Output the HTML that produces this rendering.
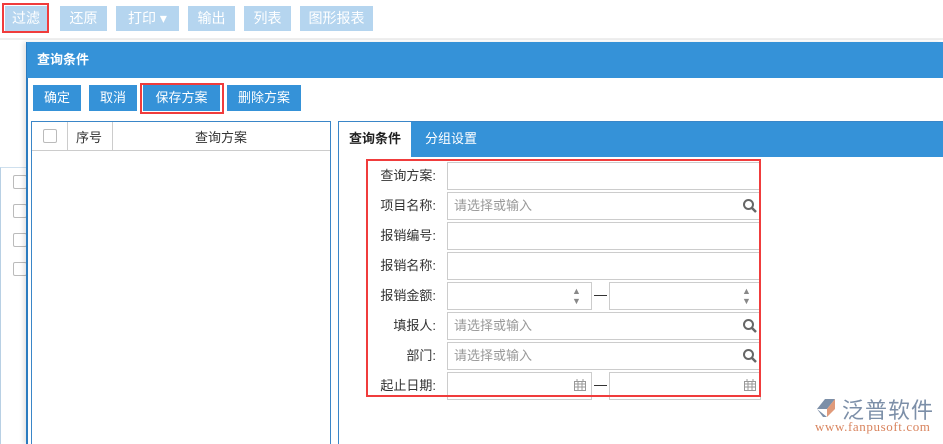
<!DOCTYPE html>
<html style="width:943px;height:444px;overflow:hidden"><head><meta charset="utf-8"><style>
*{margin:0;padding:0;box-sizing:border-box}
body{width:943px;height:444px;overflow:hidden;background:#fff;position:relative;font-family:"Liberation Sans","Noto Sans CJK SC",sans-serif;font-size:13px;color:#333}
.a{position:absolute}
.tb{position:absolute;top:6px;height:25px;background:#b5d5ef;color:#fff;font-size:14px;line-height:25px;text-align:center}
.btn{position:absolute;top:85px;height:26px;background:#3592d8;color:#fff;font-size:13px;line-height:26px;text-align:center}
.red{position:absolute;border:2px solid #f03c3c}
.lbl{position:absolute;left:366px;width:70px;height:28px;line-height:28px;text-align:right;font-size:13px;color:#333}
.in{position:absolute;height:28px;border:1px solid #ccc;background:#fff;color:#999;font-size:13px;line-height:26px;padding-left:6px}
.cb{position:absolute;width:14px;height:14px;border:1px solid #bbb;border-radius:2px;background:#fff}
</style></head><body>
<div class="a" style="left:0;top:38px;width:943px;height:2px;background:#eee"></div>
<div class="tb" style="left:5px;width:42px">过滤</div>
<div class="red" style="left:2px;top:3px;width:47px;height:30px"></div>
<div class="tb" style="left:60px;width:47px">还原</div>
<div class="tb" style="left:116px;width:63px">打印 ▾</div>
<div class="tb" style="left:188px;width:47px">输出</div>
<div class="tb" style="left:244px;width:47px">列表</div>
<div class="tb" style="left:300px;width:73px">图形报表</div>
<div class="a" style="left:0;top:167px;width:27px;height:277px;border-top:1px solid #cfe0ee;border-left:1px solid #b8d0e4"></div>
<div class="cb" style="left:13px;top:175px"></div>
<div class="cb" style="left:13px;top:204px"></div>
<div class="cb" style="left:13px;top:233px"></div>
<div class="cb" style="left:13px;top:262px"></div>
<div class="a" style="left:26px;top:42px;width:917px;height:402px;background:#fff;border-left:2px solid #2b7bbf;box-shadow:-3px 0 4px rgba(0,0,0,.1)"></div>
<div class="a" style="left:27px;top:42px;width:916px;height:36px;background:#3592d8;color:#fff;font-weight:bold;font-size:13px;line-height:36px;padding-left:10px">查询条件</div>
<div class="btn" style="left:33px;width:48px">确定</div>
<div class="btn" style="left:89px;width:48px">取消</div>
<div class="btn" style="left:143px;width:77px">保存方案</div>
<div class="red" style="left:140px;top:83px;width:84px;height:31px"></div>
<div class="btn" style="left:227px;width:74px">删除方案</div>
<div class="a" style="left:31px;top:121px;width:300px;height:326px;border:1px solid #3a86c8"></div>
<div class="a" style="left:32px;top:150px;width:298px;height:1px;background:#ccc"></div>
<div class="a" style="left:67px;top:122px;width:1px;height:28px;background:#ccc"></div>
<div class="a" style="left:112px;top:122px;width:1px;height:28px;background:#ccc"></div>
<div class="cb" style="left:43px;top:129px"></div>
<div class="a" style="left:76px;top:127px;font-size:13px">序号</div>
<div class="a" style="left:195px;top:127px;font-size:13px">查询方案</div>
<div class="a" style="left:338px;top:121px;width:610px;height:326px;border:1px solid #3a86c8"></div>
<div class="a" style="left:339px;top:122px;width:604px;height:35px;background:#3592d8"></div>
<div class="a" style="left:339px;top:122px;width:72px;height:36px;background:#fff;font-weight:bold;font-size:13px;line-height:34px;text-align:center;color:#222">查询条件</div>
<div class="a" style="left:425px;top:122px;color:#fff;font-size:13px;line-height:34px">分组设置</div>
<div class="lbl" style="top:162px">查询方案:</div>
<div class="in" style="left:447px;top:162px;width:314px"></div>
<div class="lbl" style="top:192px">项目名称:</div>
<div class="in" style="left:447px;top:192px;width:314px">请选择或输入</div>
<div class="lbl" style="top:222px">报销编号:</div>
<div class="in" style="left:447px;top:222px;width:314px"></div>
<div class="lbl" style="top:252px">报销名称:</div>
<div class="in" style="left:447px;top:252px;width:314px"></div>
<div class="lbl" style="top:282px">报销金额:</div>
<div class="in" style="left:447px;top:282px;width:145px"></div>
<div class="in" style="left:609px;top:282px;width:152px"></div>
<div class="a" style="left:594px;top:295px;width:13px;height:1px;background:#333"></div>
<div class="a" style="left:572px;top:286px;color:#888;font-size:9px;line-height:10px">▲<br>▼</div>
<div class="a" style="left:742px;top:286px;color:#888;font-size:9px;line-height:10px">▲<br>▼</div>
<div class="lbl" style="top:312px">填报人:</div>
<div class="in" style="left:447px;top:312px;width:314px">请选择或输入</div>
<div class="lbl" style="top:342px">部门:</div>
<div class="in" style="left:447px;top:342px;width:314px">请选择或输入</div>
<div class="lbl" style="top:372px">起止日期:</div>
<div class="in" style="left:447px;top:372px;width:145px"></div>
<div class="in" style="left:609px;top:372px;width:152px"></div>
<div class="a" style="left:594px;top:385px;width:13px;height:1px;background:#333"></div>
<svg class="a" style="left:742px;top:198px" width="16" height="16"><circle cx="6.5" cy="6.5" r="4.5" fill="none" stroke="#666" stroke-width="2"/><path d="M10 10l4 4" stroke="#666" stroke-width="2.5"/></svg>
<svg class="a" style="left:742px;top:318px" width="16" height="16"><circle cx="6.5" cy="6.5" r="4.5" fill="none" stroke="#666" stroke-width="2"/><path d="M10 10l4 4" stroke="#666" stroke-width="2.5"/></svg>
<svg class="a" style="left:742px;top:348px" width="16" height="16"><circle cx="6.5" cy="6.5" r="4.5" fill="none" stroke="#666" stroke-width="2"/><path d="M10 10l4 4" stroke="#666" stroke-width="2.5"/></svg>
<svg class="a" style="left:574px;top:379px" width="12" height="12"><rect x="0.5" y="2.5" width="11" height="9" fill="none" stroke="#999"/><path d="M0 5h12M4 3v9M8 3v9M0 8h12M3 0v3M9 0v3" stroke="#999"/></svg>
<svg class="a" style="left:744px;top:379px" width="12" height="12"><rect x="0.5" y="2.5" width="11" height="9" fill="none" stroke="#999"/><path d="M0 5h12M4 3v9M8 3v9M0 8h12M3 0v3M9 0v3" stroke="#999"/></svg>
<div class="red" style="left:366px;top:159px;width:395px;height:238px"></div>
<svg class="a" style="left:815px;top:397px" width="28" height="22"><path d="M2 12L10 2h10L12 12z" fill="#7c8fa8"/><path d="M12 12l8-10v10l-8 8z" fill="#e09a7a"/><path d="M2 12l6 8h4z" fill="#7c8fa8"/></svg>
<div class="a" style="left:842px;top:393px;font-size:22px;color:#7c8fa8;letter-spacing:1px">泛普软件</div>
<div class="a" style="left:815px;top:419px;font-size:13px;color:#d9845e;font-family:'Liberation Serif',serif;letter-spacing:0.6px">www.fanpusoft.com</div>
</body></html>
